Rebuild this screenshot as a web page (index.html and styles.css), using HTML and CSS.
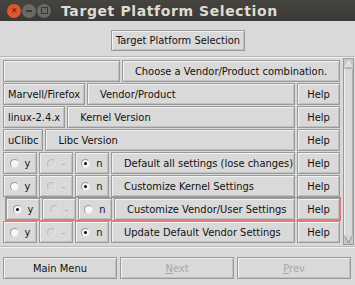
FILE: index.html
```html
<!DOCTYPE html>
<html lang="en">
<head>
    <meta charset="UTF-8">
    <title>Target Platform Selection</title>
    <link rel="stylesheet" href="styles.css">
</head>
<body>
    <div class="window">
        <div class="titlebar">
            <div class="wm-buttons">
                <span class="wm close">&#x2715;</span>
                <span class="wm min"></span>
                <span class="wm max"></span>
            </div>
            <div class="title">Target Platform Selection</div>
        </div>

        <div class="header">
            <button class="btn top-btn">Target Platform Selection</button>
        </div>

        <div class="main">
            <div class="list">
                <div class="row">
                    <button class="btn blank"></button>
                    <button class="btn grow">Choose a Vendor/Product combination.</button>
                </div>
                <div class="row">
                    <button class="btn value">Marvell/Firefox</button>
                    <button class="btn grow left">Vendor/Product</button>
                    <button class="btn help">Help</button>
                </div>
                <div class="row">
                    <button class="btn value">linux-2.4.x</button>
                    <button class="btn grow left">Kernel Version</button>
                    <button class="btn help">Help</button>
                </div>
                <div class="row">
                    <button class="btn value">uClibc</button>
                    <button class="btn grow left">Libc Version</button>
                    <button class="btn help">Help</button>
                </div>
                <div class="row">
                    <button class="btn radio"><i class="dot"></i>y</button>
                    <button class="btn radio off"><i class="dot"></i>-</button>
                    <button class="btn radio"><i class="dot on"></i>n</button>
                    <button class="btn grow left">Default all settings (lose changes)</button>
                    <button class="btn help">Help</button>
                </div>
                <div class="row">
                    <button class="btn radio"><i class="dot"></i>y</button>
                    <button class="btn radio off"><i class="dot"></i>-</button>
                    <button class="btn radio"><i class="dot on"></i>n</button>
                    <button class="btn grow left">Customize Kernel Settings</button>
                    <button class="btn help">Help</button>
                </div>
                <div class="row focus">
                    <button class="btn radio"><i class="dot on"></i>y</button>
                    <button class="btn radio off"><i class="dot"></i>-</button>
                    <button class="btn radio"><i class="dot"></i>n</button>
                    <button class="btn grow left">Customize Vendor/User Settings</button>
                    <button class="btn help">Help</button>
                </div>
                <div class="row">
                    <button class="btn radio"><i class="dot"></i>y</button>
                    <button class="btn radio off"><i class="dot"></i>-</button>
                    <button class="btn radio"><i class="dot on"></i>n</button>
                    <button class="btn grow left">Update Default Vendor Settings</button>
                    <button class="btn help">Help</button>
                </div>
            </div>
            <div class="scrollbar">
                <svg class="arrow" width="9" height="9" viewBox="0 0 9 9"><polygon points="4.5,1 8,8 1,8" fill="#d9d9d9" stroke="#f4f4f4"/><polyline points="8,8 1,8" fill="none" stroke="#8a8a8a"/></svg>
                <div class="trough"></div>
                <svg class="arrow" width="9" height="9" viewBox="0 0 9 9"><polygon points="1,1 8,1 4.5,8" fill="#d9d9d9" stroke="#8a8a8a"/><polyline points="1,1 8,1" fill="none" stroke="#f4f4f4"/></svg>
            </div>
        </div>

        <div class="footer">
            <button class="btn nav">Main Menu</button>
            <button class="btn nav disabled"><u>N</u>ext</button>
            <button class="btn nav disabled"><u>P</u>rev</button>
        </div>
    </div>
</body>
</html>
```

FILE: styles.css
```css
* {
    box-sizing: border-box;
}
body {
    margin: 0;
    background-color: #d9d9d9;
    font-family: "DejaVu Sans", sans-serif;
}
.window {
    width: 355px;
    height: 285px;
    background: #d9d9d9;
    display: flex;
    flex-direction: column;
    overflow: hidden;
}
.titlebar {
    height: 21px;
    flex-shrink: 0;
    background: linear-gradient(#45443f, #3a3935);
    display: flex;
    align-items: center;
}
.wm-buttons {
    display: flex;
    gap: 1px;
    padding-left: 7px;
    width: 58px;
}
.wm {
    width: 14px;
    height: 14px;
    border-radius: 50%;
    background: #6a6964;
    color: #3c3b37;
    font-size: 8px;
    font-weight: bold;
    display: flex;
    align-items: center;
    justify-content: center;
}
.close {
    background: #e2572b;
    color: #5a2010;
}
.min::after {
    content: "";
    width: 6px;
    height: 2px;
    background: #3c3b37;
}
.max::after {
    content: "";
    width: 5px;
    height: 5px;
    border: 1px solid #3c3b37;
}
.title {
    color: #dfdbd2;
    font-weight: bold;
    font-size: 14px;
    letter-spacing: 0.6px;
    padding-left: 3px;
}
.btn {
    font-family: "DejaVu Sans Condensed", "DejaVu Sans", sans-serif;
    font-stretch: condensed;
    font-size: 11px;
    color: #111;
    background: #d9d9d9;
    height: 22px;
    padding: 0 4px;
    border: 1px solid #9a9a9a;
    box-shadow: inset 1px 1px 0 #f2f2f2, inset -1px -1px 0 #c0c0c0;
    display: flex;
    align-items: center;
    justify-content: center;
    white-space: nowrap;
    flex-shrink: 0;
    min-width: 0;
    overflow: hidden;
}
.header {
    height: 36px;
    flex-shrink: 0;
    display: flex;
    justify-content: center;
    align-items: center;
    border-bottom: 1px solid #b8b8b8;
}
.top-btn {
    height: 21px;
    width: 134px;
    margin-top: 3px;
    margin-left: 1px;
}
.main {
    display: flex;
    height: 190px;
    flex-shrink: 0;
    border-top: 1px solid #f2f2f2;
    border-bottom: 1px solid #b8b8b8;
}
.list {
    flex: 1;
    min-width: 0;
    display: flex;
    flex-direction: column;
    gap: 1px;
    padding: 2px 3px 0 3px;
}
.row {
    display: flex;
    gap: 2px;
    height: 22px;
}
.blank {
    width: 117px;
}
.grow {
    flex: 1 1 0;
}
.left {
    justify-content: flex-start;
    padding-left: 12px;
}
.help {
    width: 43px;
}
.radio {
    width: 34px;
    gap: 6px;
    padding: 0;
}
.radio.off {
    color: #a8a8a8;
}
.dot {
    width: 9px;
    height: 9px;
    border-radius: 50%;
    background: #f8f8f8;
    border: 1px solid #9a9a9a;
    border-right-color: #e4e4e4;
    border-bottom-color: #e4e4e4;
    display: flex;
    align-items: center;
    justify-content: center;
}
.off .dot {
    background: #d9d9d9;
    border-color: #bcbcbc #e4e4e4 #e4e4e4 #bcbcbc;
}
.dot.on::after {
    content: "";
    width: 3px;
    height: 3px;
    border-radius: 50%;
    background: #000;
}
.row.focus {
    box-shadow: 0 0 0 1px #e07a7a;
    margin-left: 3px;
}
.scrollbar {
    width: 11px;
    flex-shrink: 0;
    margin: 0 1px 1px 0;
    border: 1px solid #9a9a9a;
    background: #c8c8c8;
    display: flex;
    flex-direction: column;
    align-items: center;
    padding-top: 1px;
}
.trough {
    flex: 1;
    width: 9px;
    background: #d9d9d9;
    border-left: 1px solid #f2f2f2;
    border-right: 1px solid #b0b0b0;
}
.footer {
    display: flex;
    gap: 3px;
    padding: 9px 4px 0 3px;
    border-top: 1px solid #f2f2f2;
}
.nav {
    flex: 1 1 0;
    height: 22px;
}
.nav.disabled {
    color: #a8a8a8;
}
.nav u {
    text-decoration: underline;
}
```
